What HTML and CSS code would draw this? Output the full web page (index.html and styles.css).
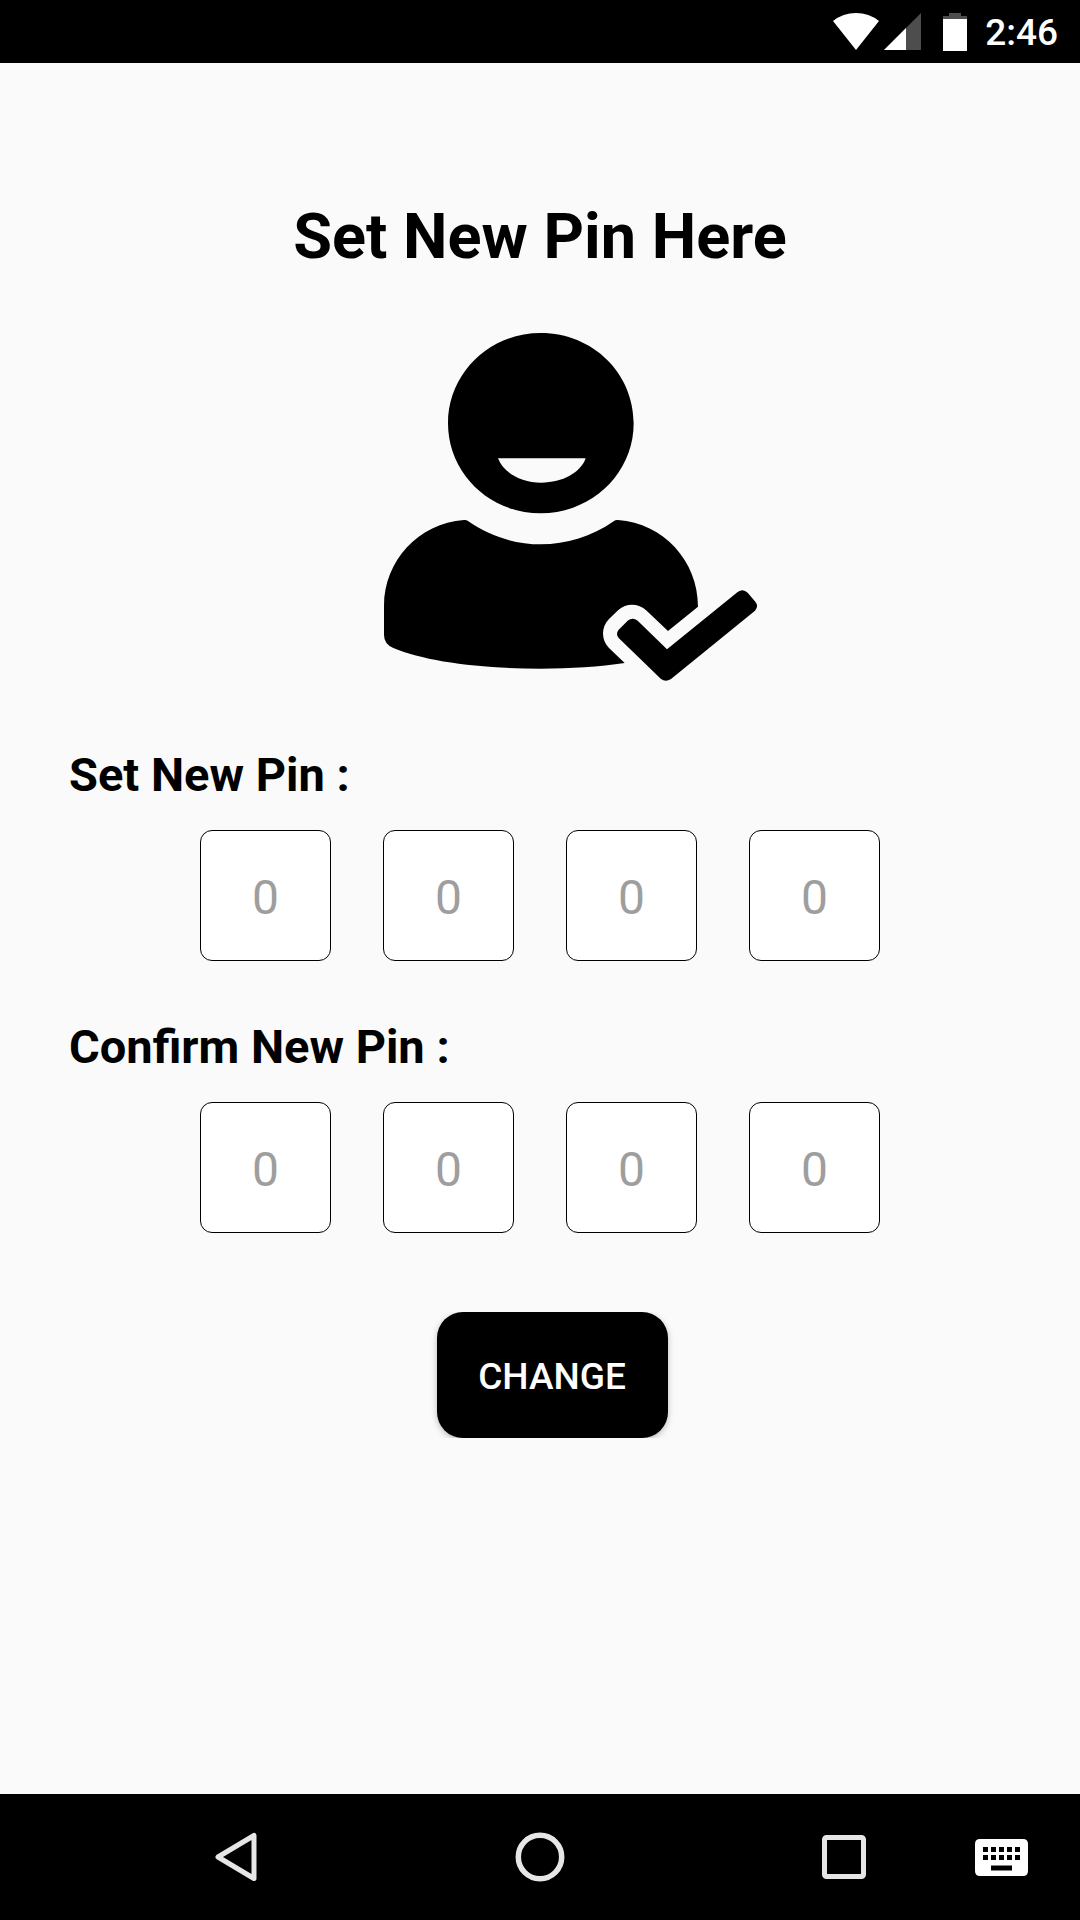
FILE: index.html
```html
<!DOCTYPE html>
<html lang="en">
<head>
<meta charset="utf-8">
<meta name="viewport" content="width=device-width, initial-scale=1">
<title>Set New Pin</title>
<link rel="stylesheet" href="styles.css">
</head>
<body>
<header class="status-bar">
  <svg class="status-wifi" viewBox="0 0 46 38" width="46" height="38" aria-hidden="true"><path d="M0 8Q10 0 23 0T46 8L23 37Z" fill="#fff"/></svg>
  <svg class="status-signal" viewBox="0 0 37 38" width="37" height="38" aria-hidden="true"><path d="M37 0V37H0Z" fill="#4d4d4d"/><path d="M22 15V37H0Z" fill="#fff"/></svg>
  <svg class="status-battery" viewBox="0 0 24 38" width="24" height="38" aria-hidden="true"><path d="M6 0H18V3H24V7H0V3H6Z" fill="#4d4d4d"/><path d="M0 6H24V38H0Z" fill="#fff"/></svg>
  <time class="status-time">2:46</time>
</header>

<main class="screen">
  <h1 class="title">Set New Pin Here</h1>
  <svg class="user-icon" viewBox="-150 39 1320 1044" width="440" height="348" aria-hidden="true">
    <path fill-rule="evenodd" d="M512 39C669 39 791 160 791 310C791 460 666 580 512 580C358 580 234 460 234 310C234 160 358 39 512 39ZM384 415C400 458 453 488 514 488C578 488 632 458 647 415Z"/>
    <path d="M282 600Q289 599 295 604C427 696 599 696 731 604Q737 599 744 600C880 610 984 722 984 860L894 933L830 872C805 849 769 849 745 870L717 897C693 921 693 960 717 984L764 1029C690 1040 600 1046 512 1046C330 1046 165 1024 70 984Q42 972 42 945V858C42 722 146 610 282 600Z"/>
    <path d="M746 929L773 902Q788 890 803 902L891 988L1103 816Q1119 804 1133 818L1156 845Q1167 859 1155 872L903 1077Q887 1088 873 1077L746 954Q736 942 746 929Z"/>
  </svg>

  <form class="pin-form">
    <fieldset class="pin-group">
      <legend class="pin-label">Set New Pin :</legend>
      <div class="pin-row">
        <input class="pin-digit" type="text" inputmode="numeric" maxlength="1" placeholder="0" aria-label="New pin digit 1">
        <input class="pin-digit" type="text" inputmode="numeric" maxlength="1" placeholder="0" aria-label="New pin digit 2">
        <input class="pin-digit" type="text" inputmode="numeric" maxlength="1" placeholder="0" aria-label="New pin digit 3">
        <input class="pin-digit" type="text" inputmode="numeric" maxlength="1" placeholder="0" aria-label="New pin digit 4">
      </div>
    </fieldset>
    <fieldset class="pin-group">
      <legend class="pin-label">Confirm New Pin :</legend>
      <div class="pin-row">
        <input class="pin-digit" type="text" inputmode="numeric" maxlength="1" placeholder="0" aria-label="Confirm pin digit 1">
        <input class="pin-digit" type="text" inputmode="numeric" maxlength="1" placeholder="0" aria-label="Confirm pin digit 2">
        <input class="pin-digit" type="text" inputmode="numeric" maxlength="1" placeholder="0" aria-label="Confirm pin digit 3">
        <input class="pin-digit" type="text" inputmode="numeric" maxlength="1" placeholder="0" aria-label="Confirm pin digit 4">
      </div>
    </fieldset>
    <button class="change-button" type="button">CHANGE</button>
  </form>
</main>

<nav class="nav-bar" aria-label="System">
  <button class="nav-key" type="button" aria-label="Back">
    <svg viewBox="0 0 50 50" width="50" height="50"><path d="M43 3.500V46.500L7 25Z" fill="none" stroke="#e6e6e6" stroke-width="5" stroke-linejoin="round"/></svg>
  </button>
  <button class="nav-key" type="button" aria-label="Home">
    <svg viewBox="0 0 50 50" width="50" height="50"><circle cx="25" cy="25" r="21.700" fill="none" stroke="#e6e6e6" stroke-width="5.500"/></svg>
  </button>
  <button class="nav-key" type="button" aria-label="Recent apps">
    <svg viewBox="0 0 50 50" width="50" height="50"><rect x="5.500" y="5.500" width="39" height="39" rx="2" fill="none" stroke="#e6e6e6" stroke-width="5"/></svg>
  </button>
  <button class="nav-key nav-keyboard" type="button" aria-label="Switch keyboard">
    <svg viewBox="0 0 53 37" width="53" height="37"><path fill="#fff" fill-rule="evenodd" d="M5 0H48Q53 0 53 5V32Q53 37 48 37H5Q0 37 0 32V5Q0 0 5 0ZM8 8v5h5v-5ZM16 8v5h5v-5ZM24 8v5h5v-5ZM32 8v5h5v-5ZM40 8v5h5v-5ZM8 16v5h5v-5ZM16 16v5h5v-5ZM24 16v5h5v-5ZM32 16v5h5v-5ZM40 16v5h5v-5ZM16 26.500v5h21v-5Z"/></svg>
  </button>
</nav>
</body>
</html>
```
FILE: styles.css
```css
* {
  box-sizing: border-box;
}

body {
  margin: 0;
  min-height: 100vh;
  display: flex;
  flex-direction: column;
  background: #fafafa;
  color: #000;
  font-family: Roboto, "Noto Sans", sans-serif;
}

svg {
  display: block;
}

.status-bar {
  display: flex;
  justify-content: flex-end;
  align-items: center;
  height: 63px;
  padding-right: 22px;
  background: #000;
  color: #fff;
}

.status-signal {
  margin-left: 5px;
}

.status-battery {
  margin-left: 22px;
}

.status-time {
  margin-left: 18px;
  padding-top: 2px;
  font-size: 37px;
  line-height: 44px;
  font-weight: 500;
}

.screen {
  flex: 1;
  display: flex;
  flex-direction: column;
  align-items: center;
  padding: 137px 0 80px;
}

.title {
  margin: 0 0 59px;
  font-size: 63px;
  line-height: 74px;
  font-weight: 700;
}

.pin-form {
  align-self: stretch;
  display: flex;
  flex-direction: column;
  align-items: center;
  padding-top: 65px;
}

.pin-group {
  align-self: stretch;
  margin: 0 0 57px;
  padding: 0;
  border: 0;
}

.pin-label {
  padding: 0 69px;
  margin-bottom: 26px;
  font-size: 47px;
  line-height: 58px;
  font-weight: 700;
}

.pin-row {
  display: flex;
  justify-content: center;
  gap: 52px;
}

.pin-digit {
  width: 131px;
  height: 131px;
  padding: 4px 0 0;
  border: 1px solid #000;
  border-radius: 12px;
  background: #fff;
  color: #000;
  font-family: inherit;
  font-size: 48px;
  text-align: center;
}

.pin-digit::placeholder {
  color: #9e9e9e;
  opacity: 1;
}

.change-button {
  width: 231px;
  height: 126px;
  margin: 22px 0 0 24px;
  padding: 2px 0 0;
  border: 0;
  border-radius: 26px;
  background: #000;
  color: #fff;
  box-shadow: 0 2px 6px rgba(0, 0, 0, 0.25);
  clip-path: inset(0 -8px);
  font-family: inherit;
  font-size: 37px;
  font-weight: 500;
}

.nav-bar {
  display: grid;
  grid-template-columns: 1fr 1fr 1fr 84px;
  justify-items: center;
  height: 126px;
  padding-left: 84px;
  background: #000;
}

.nav-key {
  display: flex;
  justify-content: center;
  align-items: center;
  width: 158px;
  padding: 0;
  border: 0;
  background: none;
}

.nav-keyboard {
  justify-self: end;
}
```
